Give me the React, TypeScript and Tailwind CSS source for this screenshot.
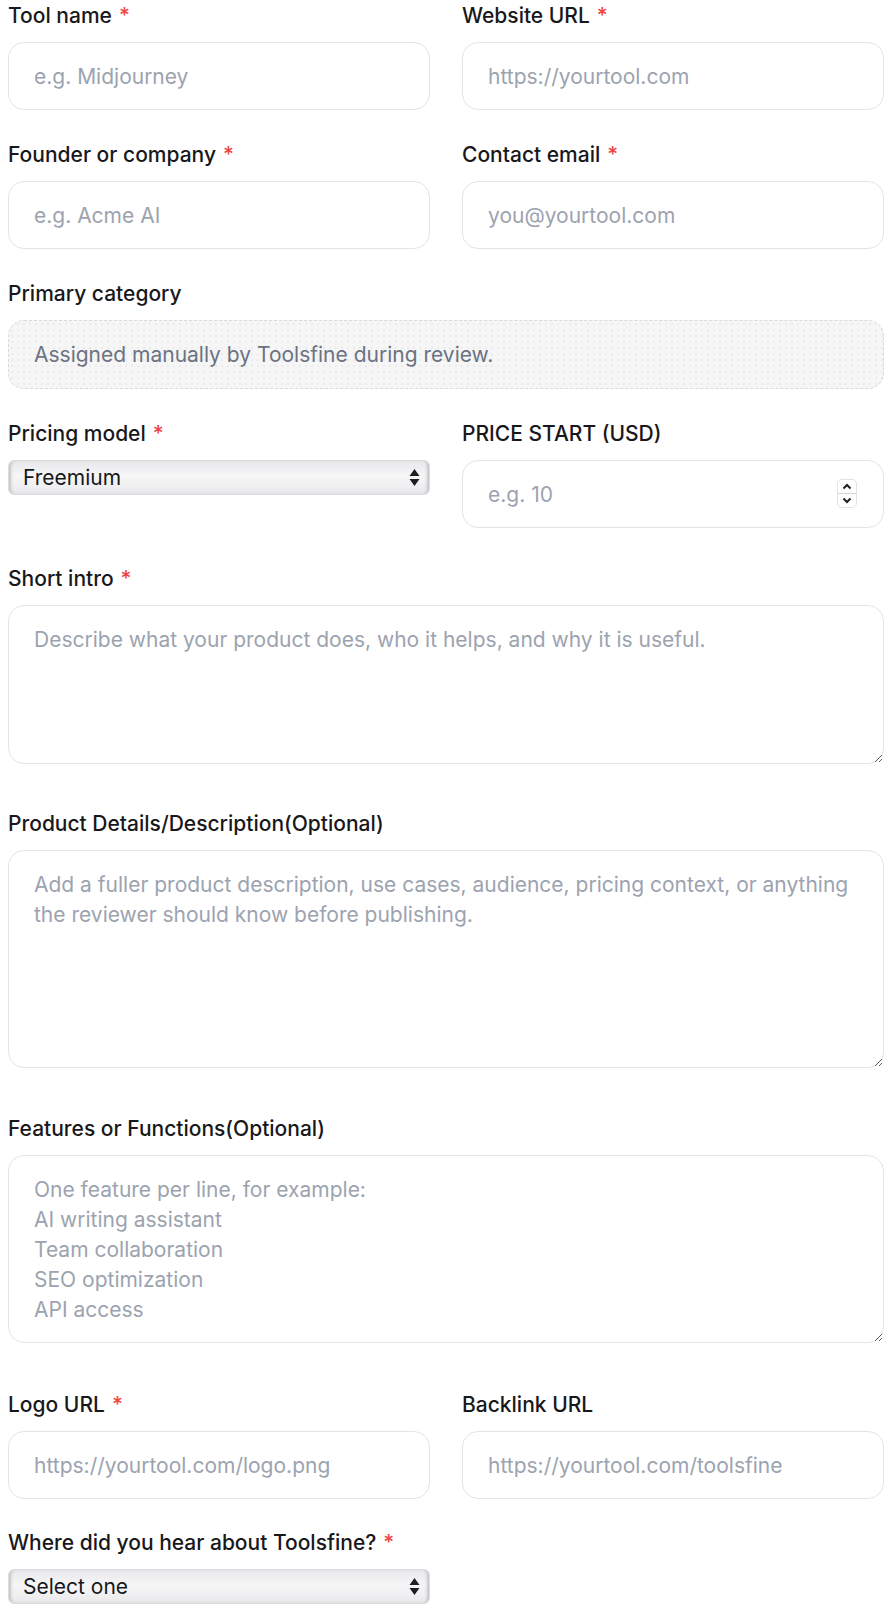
import React from "react";

const font = { fontFamily: "Inter, 'Noto Sans', sans-serif" };

function Label({ text, required }: { text: string; required?: boolean }) {
  return (
    <label className="block h-[32px] text-[21px] leading-[32px] font-medium text-[#18181b] mb-[10px] whitespace-nowrap">
      {text}
      {required && <span className="ml-[7px] text-[#ef4444]">*</span>}
    </label>
  );
}

const inputCls =
  "block w-full h-[68px] rounded-[16px] border border-[#e4e4e7] bg-white px-[25px] text-[21px] leading-[30px] text-[#18181b] placeholder:text-[#9ca3af] outline-none";

const areaCls =
  "block w-full rounded-[16px] border border-[#e4e4e7] bg-white px-[25px] pt-[19px] text-[21px] leading-[30px] text-[#18181b] placeholder:text-[#9ca3af] outline-none";

function NativeSelect({ value, options }: { value: string; options: string[] }) {
  return (
    <div className="relative mt-[4px] h-[35px] w-full">
      <select
        defaultValue={value}
        className="block h-[35px] w-full appearance-none rounded-[6px] border border-[#dcdce0] bg-[linear-gradient(to_bottom,#e8e8eb_0%,#f6f6f7_45%,#efeff1_80%,#e6e6e9_100%)] pl-[14px] pr-[30px] text-[21px] leading-[30px] text-[#18181b] shadow-[inset_4px_0_3px_-2px_#c4c4c9,inset_-4px_0_3px_-2px_#c4c4c9] outline-none"
      >
        {options.map((o) => (
          <option key={o}>{o}</option>
        ))}
      </select>
      <svg
        className="pointer-events-none absolute right-[10px] top-[8px]"
        width="11"
        height="19"
        viewBox="0 0 11 19"
      >
        <path d="M5.5 1 L10.5 8 L0.5 8 Z" fill="#1f1f23" />
        <path d="M5.5 18 L10.5 11 L0.5 11 Z" fill="#1f1f23" />
      </svg>
    </div>
  );
}

export default function App() {
  return (
    <div style={font} className="w-[896px] bg-white pl-[8px] pr-[12px] pb-[16px]">
      <div className="grid grid-cols-2 gap-x-[32px]">
        <div>
          <Label text="Tool name" required />
          <input className={inputCls} placeholder="e.g. Midjourney" />
        </div>
        <div>
          <Label text="Website URL" required />
          <input className={inputCls} placeholder="https://yourtool.com" />
        </div>
      </div>

      <div className="grid grid-cols-2 gap-x-[32px] mt-[29px]">
        <div>
          <Label text="Founder or company" required />
          <input className={inputCls} placeholder="e.g. Acme AI" />
        </div>
        <div>
          <Label text="Contact email" required />
          <input className={inputCls} placeholder="you@yourtool.com" />
        </div>
      </div>

      <div className="mt-[29px]">
        <Label text="Primary category" />
        <div className="flex h-[69px] items-center rounded-[16px] border border-dashed border-[#dadade] bg-[#f6f6f7] bg-[radial-gradient(#ebebee_1px,transparent_1px)] bg-[length:6px_6px] px-[25px] text-[21px] leading-[30px] text-[#6b7280]">
          Assigned manually by Toolsfine during review.
        </div>
      </div>

      <div className="grid grid-cols-2 gap-x-[32px] mt-[29px]">
        <div>
          <Label text="Pricing model" required />
          <NativeSelect value="Freemium" options={["Free", "Freemium", "Paid"]} />
        </div>
        <div>
          <Label text="PRICE START (USD)" />
          <div className="relative">
            <input
              type="number"
              className={inputCls + " [appearance:textfield] [&::-webkit-inner-spin-button]:appearance-none [&::-webkit-outer-spin-button]:appearance-none"}
              placeholder="e.g. 10"
            />
            <div className="pointer-events-none absolute right-[27px] top-[19px] flex h-[29px] w-[20px] flex-col items-center rounded-[5px] border border-[#e2e2e6] bg-white">
              <div className="flex flex-1 items-center justify-center">
                <svg width="10" height="7" viewBox="0 0 10 7">
                  <path d="M1.5 5.5 L5 2 L8.5 5.5" fill="none" stroke="#1f1f23" strokeWidth="2" />
                </svg>
              </div>
              <div className="h-px w-full bg-[#d4d4d8]" />
              <div className="flex flex-1 items-center justify-center">
                <svg width="10" height="7" viewBox="0 0 10 7">
                  <path d="M1.5 1.5 L5 5 L8.5 1.5" fill="none" stroke="#1f1f23" strokeWidth="2" />
                </svg>
              </div>
            </div>
          </div>
        </div>
      </div>

      <div className="mt-[35px]">
        <Label text="Short intro" required />
        <textarea
          className={areaCls + " h-[159px]"}
          placeholder="Describe what your product does, who it helps, and why it is useful."
        />
      </div>

      <div className="mt-[44px]">
        <Label text="Product Details/Description(Optional)" />
        <textarea
          className={areaCls + " h-[218px]"}
          placeholder="Add a fuller product description, use cases, audience, pricing context, or anything the reviewer should know before publishing."
        />
      </div>

      <div className="mt-[45px]">
        <Label text="Features or Functions(Optional)" />
        <textarea
          className={areaCls + " h-[188px]"}
          placeholder={"One feature per line, for example:\nAI writing assistant\nTeam collaboration\nSEO optimization\nAPI access"}
        />
      </div>

      <div className="grid grid-cols-2 gap-x-[32px] mt-[46px]">
        <div>
          <Label text="Logo URL" required />
          <input className={inputCls} placeholder="https://yourtool.com/logo.png" />
        </div>
        <div>
          <Label text="Backlink URL" />
          <input className={inputCls} placeholder="https://yourtool.com/toolsfine" />
        </div>
      </div>

      <div className="mt-[28px] grid grid-cols-2 gap-x-[32px]">
        <div>
          <Label text="Where did you hear about Toolsfine?" required />
          <NativeSelect value="Select one" options={["Select one", "Search", "Social media"]} />
        </div>
      </div>
    </div>
  );
}
